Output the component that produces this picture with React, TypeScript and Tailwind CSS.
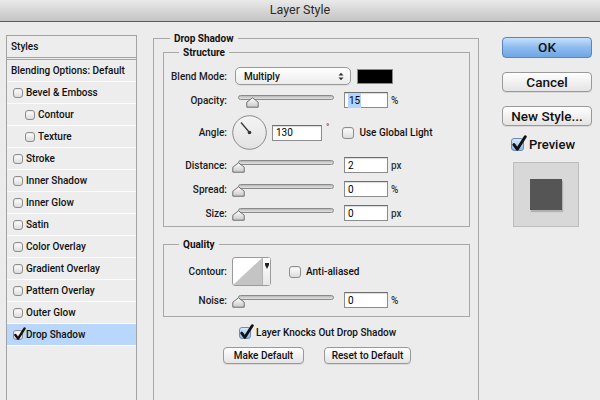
import type { ReactNode } from 'react';

const font = { fontFamily: 'Roboto, "Liberation Sans", Arial, sans-serif' };

function CheckBox({ checked = false, size = 11 }: { checked?: boolean; size?: number }) {
  return (
    <span
      className="relative inline-block shrink-0 rounded-[3px] border border-[#8d8d8d] bg-gradient-to-b from-white to-[#dcdcdc] shadow-[inset_0_1px_1px_rgba(0,0,0,0.08)]"
      style={{ width: size, height: size }}
    >
      {checked ? (
        <svg className="absolute -left-[1px] -top-[4px]" width={size + 3} height={size + 4} viewBox="0 0 14 15">
          <path d="M2.5 8.5 L5.5 12.5 L12.5 1.5" fill="none" stroke="#111" strokeWidth="2.6" strokeLinecap="round" strokeLinejoin="round" />
        </svg>
      ) : null}
    </span>
  );
}

function BlueCheck({ size = 13 }: { size?: number }) {
  return (
    <span
      className="relative inline-block shrink-0 rounded-[3px] border border-[#6a8bb8] bg-gradient-to-b from-[#d7e8fb] to-[#8fb8ea]"
      style={{ width: size, height: size }}
    >
      <svg className="absolute -left-[1px] -top-[4px]" width={size + 3} height={size + 4} viewBox="0 0 14 15">
        <path d="M2.5 8.5 L5.5 12.5 L12.5 1.5" fill="none" stroke="#111" strokeWidth="2.6" strokeLinecap="round" strokeLinejoin="round" />
      </svg>
    </span>
  );
}

function Thumb() {
  return (
    <svg width="13" height="11" viewBox="0 0 13 11">
      <defs>
        <linearGradient id="th" x1="0" y1="0" x2="0" y2="1">
          <stop offset="0" stopColor="#ffffff" />
          <stop offset="1" stopColor="#c9c9c9" />
        </linearGradient>
      </defs>
      <path d="M6.5 0.8 L12.2 5.2 L12.2 10.2 L0.8 10.2 L0.8 5.2 Z" fill="url(#th)" stroke="#6f6f6f" strokeWidth="1" strokeLinejoin="round" />
    </svg>
  );
}

function Slider({ pos }: { pos: number }) {
  return (
    <div className="relative h-[17px] w-[102px] shrink-0">
      <div className="absolute left-[6px] right-0 top-[3px] h-[5px] rounded-full border border-[#8a8a8a] bg-gradient-to-b from-[#b9b9b9] to-[#e3e3e3]" />
      <div className="absolute top-[5px]" style={{ left: pos }}>
        <Thumb />
      </div>
    </div>
  );
}

function NumBox({ value, selected = false, w = 44 }: { value: string; selected?: boolean; w?: number }) {
  return (
    <div
      className="flex h-[16px] shrink-0 items-center border border-[#8c8c8c] border-t-[#6e6e6e] bg-white pl-[3px] text-[10px] text-black shadow-[inset_0_1px_1px_rgba(0,0,0,0.15)]"
      style={{ width: w }}
    >
      <span className={selected ? 'bg-[#b3d4fc] px-[1px]' : ''}>{value}</span>
    </div>
  );
}

function Label({ children }: { children: ReactNode }) {
  return <span className="w-[63px] shrink-0 text-right text-[10px] font-medium text-[#1a1a1a]">{children}</span>;
}

function SliderRow({ label, value, unit, pos, selected, mt }: { label: string; value: string; unit: string; pos: number; selected?: boolean; mt: string }) {
  return (
    <div className={`flex h-[16px] items-center ${mt}`}>
      <Label>{label}</Label>
      <div className="ml-[5px]">
        <Slider pos={pos} />
      </div>
      <div className="ml-[10px]">
        <NumBox value={value} selected={selected} />
      </div>
      <span className="ml-[3px] text-[10px] font-medium text-[#333]">{unit}</span>
    </div>
  );
}

function Button({ children, className = '' }: { children: ReactNode; className?: string }) {
  return (
    <div
      className={`flex items-center justify-center rounded-[4px] border border-[#999] bg-gradient-to-b from-white to-[#e4e4e4] text-[#111] shadow-[0_1px_0_rgba(0,0,0,0.08)] ${className}`}
    >
      {children}
    </div>
  );
}

const styleItems: { label: string; indent?: boolean; checked?: boolean }[] = [
  { label: 'Bevel & Emboss' },
  { label: 'Contour', indent: true },
  { label: 'Texture', indent: true },
  { label: 'Stroke' },
  { label: 'Inner Shadow' },
  { label: 'Inner Glow' },
  { label: 'Satin' },
  { label: 'Color Overlay' },
  { label: 'Gradient Overlay' },
  { label: 'Pattern Overlay' },
  { label: 'Outer Glow' },
  { label: 'Drop Shadow', checked: true },
];

export default function App() {
  return (
    <div className="h-[400px] w-[600px] overflow-hidden bg-[#ececec] text-[#111]" style={font}>
      {/* title bar */}
      <div className="flex h-[22px] items-center justify-center border-b border-[#5c5c5c] bg-gradient-to-b from-[#eaeaea] to-[#c4c4c4] text-[12.5px] text-[#2a2a2a]">
        Layer Style
      </div>

      <div className="flex">
        {/* styles list */}
        <div className="ml-[6px] mt-[13px] h-[380px] w-[131px] shrink-0 border border-[#a3a3a3] bg-[#ededed] text-[10px] font-medium">
          <div className="flex h-[24px] items-center border-b-[3px] border-double border-[#a3a3a3] pl-[4px]">Styles</div>
          <div className="flex h-[22px] items-center border-b border-[#fbfbfb] pl-[4px]">Blending Options: Default</div>
          {styleItems.map((item) => (
            <div
              key={item.label}
              className={`flex h-[22px] items-center gap-[3px] border-b border-[#fbfbfb] ${item.indent ? 'pl-[18px]' : 'pl-[6px]'} ${item.checked ? 'bg-[#b9d7fc]' : ''}`}
            >
              <CheckBox checked={item.checked} size={10} />
              <span>{item.label}</span>
            </div>
          ))}
        </div>

        {/* main panel */}
        <fieldset className="ml-[16px] mt-[10px] h-[400px] w-[326px] shrink-0 border border-[#a8a8a8]">
          <legend className="ml-[16px] px-[4px] text-[10px] font-bold leading-[13px] text-[#111]">Drop Shadow</legend>

          <fieldset className="ml-[9px] mr-[8px] mt-[1px] border border-[#a8a8a8] pb-[5px]">
            <legend className="ml-[15px] px-[4px] text-[10px] font-bold leading-[13px] text-[#111]">Structure</legend>

            {/* blend mode */}
            <div className="mt-[8px] flex h-[18px] items-center">
              <Label>Blend Mode:</Label>
              <div className="ml-[8px] flex h-[18px] w-[116px] items-center justify-between rounded-[5px] border border-[#9a9a9a] bg-gradient-to-b from-white to-[#ececec] pl-[8px] pr-[6px] text-[10px] font-medium shadow-[0_1px_0_rgba(0,0,0,0.06)]">
                <span>Multiply</span>
                <svg width="6" height="9" viewBox="0 0 6 9">
                  <path d="M0.5 3.5 L3 0.8 L5.5 3.5 Z M0.5 5.5 L3 8.2 L5.5 5.5 Z" fill="#333" />
                </svg>
              </div>
              <div className="ml-[6px] h-[15px] w-[36px] border border-[#8a8a8a] bg-black" />
            </div>

            <SliderRow label="Opacity:" value="15" unit="%" pos={14} selected mt="mt-[7px]" />

            {/* angle */}
            <div className="mt-[7px] flex h-[35px] items-center">
              <Label>Angle:</Label>
              <div className="ml-[5px]">
                <svg width="35" height="35" viewBox="0 0 35 35">
                  <defs>
                    <linearGradient id="dial" x1="0" y1="0" x2="0" y2="1">
                      <stop offset="0" stopColor="#f4f4f4" />
                      <stop offset="1" stopColor="#e2e2e2" />
                    </linearGradient>
                  </defs>
                  <circle cx="17.5" cy="17.5" r="16.8" fill="url(#dial)" stroke="#8a8a8a" strokeWidth="1" />
                  <line x1="17.5" y1="17.5" x2="9" y2="7.5" stroke="#333" strokeWidth="1.2" />
                  <circle cx="17.5" cy="17.5" r="1.8" fill="#333" />
                </svg>
              </div>
              <div className="ml-[5px]">
                <NumBox value="130" w={50} />
              </div>
              <span className="-mt-[10px] ml-[4px] text-[9px] text-[#333]">°</span>
              <div className="ml-[13px] flex items-center gap-[5px]">
                <CheckBox size={12} />
                <span className="text-[10px] font-medium">Use Global Light</span>
              </div>
            </div>

            <SliderRow label="Distance:" value="2" unit="px" pos={0} mt="mt-[7px]" />
            <SliderRow label="Spread:" value="0" unit="%" pos={0} mt="mt-[8px]" />
            <SliderRow label="Size:" value="0" unit="px" pos={0} mt="mt-[8px]" />
          </fieldset>

          <fieldset className="ml-[9px] mr-[8px] mt-[11px] border border-[#a8a8a8] pb-[8px]">
            <legend className="ml-[15px] px-[4px] text-[10px] font-bold leading-[13px] text-[#111]">Quality</legend>

            <div className="mt-[6px] flex h-[29px] items-center">
              <Label>Contour:</Label>
              <div className="ml-[5px] flex h-[29px] w-[39px] rounded-[3px] border border-[#9a9a9a] bg-white">
                <svg width="29" height="27" viewBox="0 0 29 27">
                  <path d="M0 27 L29 0 L29 27 Z" fill="#c4c4c4" />
                </svg>
                <div className="flex flex-1 items-start justify-center border-l border-[#b5b5b5] bg-gradient-to-b from-white to-[#e8e8e8] pt-[5px]">
                  <svg width="4" height="6" viewBox="0 0 4 6">
                    <path d="M0 0 H4 V2 L2 6 L0 2 Z" fill="#222" />
                  </svg>
                </div>
              </div>
              <div className="ml-[18px] flex items-center gap-[5px]">
                <CheckBox size={12} />
                <span className="text-[10px] font-medium">Anti-aliased</span>
              </div>
            </div>

            <SliderRow label="Noise:" value="0" unit="%" pos={0} mt="mt-[6px]" />
          </fieldset>

          <div className="mt-[8px] flex items-center pl-[85px]">
            <BlueCheck size={12} />
            <span className="ml-[5px] text-[10px] font-medium">Layer Knocks Out Drop Shadow</span>
          </div>

          <div className="mt-[7px] flex gap-[20px] pl-[69px]">
            <Button className="h-[17px] w-[81px] text-[10px] font-medium">Make Default</Button>
            <Button className="h-[17px] w-[87px] text-[10px] font-medium">Reset to Default</Button>
          </div>
        </fieldset>

        {/* right column */}
        <div className="ml-[23px] mt-[15px] flex w-[90px] shrink-0 flex-col">
          <div className="flex h-[21px] items-center justify-center rounded-[4px] border border-[#5d82b3] bg-gradient-to-b from-[#c6e0fa] via-[#8dbbee] to-[#6fa6e6] text-[13.5px] font-medium text-[#111]">
            OK
          </div>
          <Button className="mt-[14px] h-[20px] text-[13.5px] font-medium">Cancel</Button>
          <Button className="mt-[14px] h-[20px] text-[13.5px] font-medium">New Style...</Button>
          <div className="ml-[9px] mt-[9px] flex items-center gap-[5px]">
            <BlueCheck size={13} />
            <span className="text-[13px] font-medium">Preview</span>
          </div>
          <div className="ml-[11px] mt-[7px] flex h-[65px] w-[66px] items-center justify-center border border-[#bdbdbd] bg-[#d8d8d8]">
            <div className="h-[31px] w-[32px] bg-[#555] shadow-[1px_2px_1px_rgba(0,0,0,0.18)]" />
          </div>
        </div>
      </div>
    </div>
  );
}
